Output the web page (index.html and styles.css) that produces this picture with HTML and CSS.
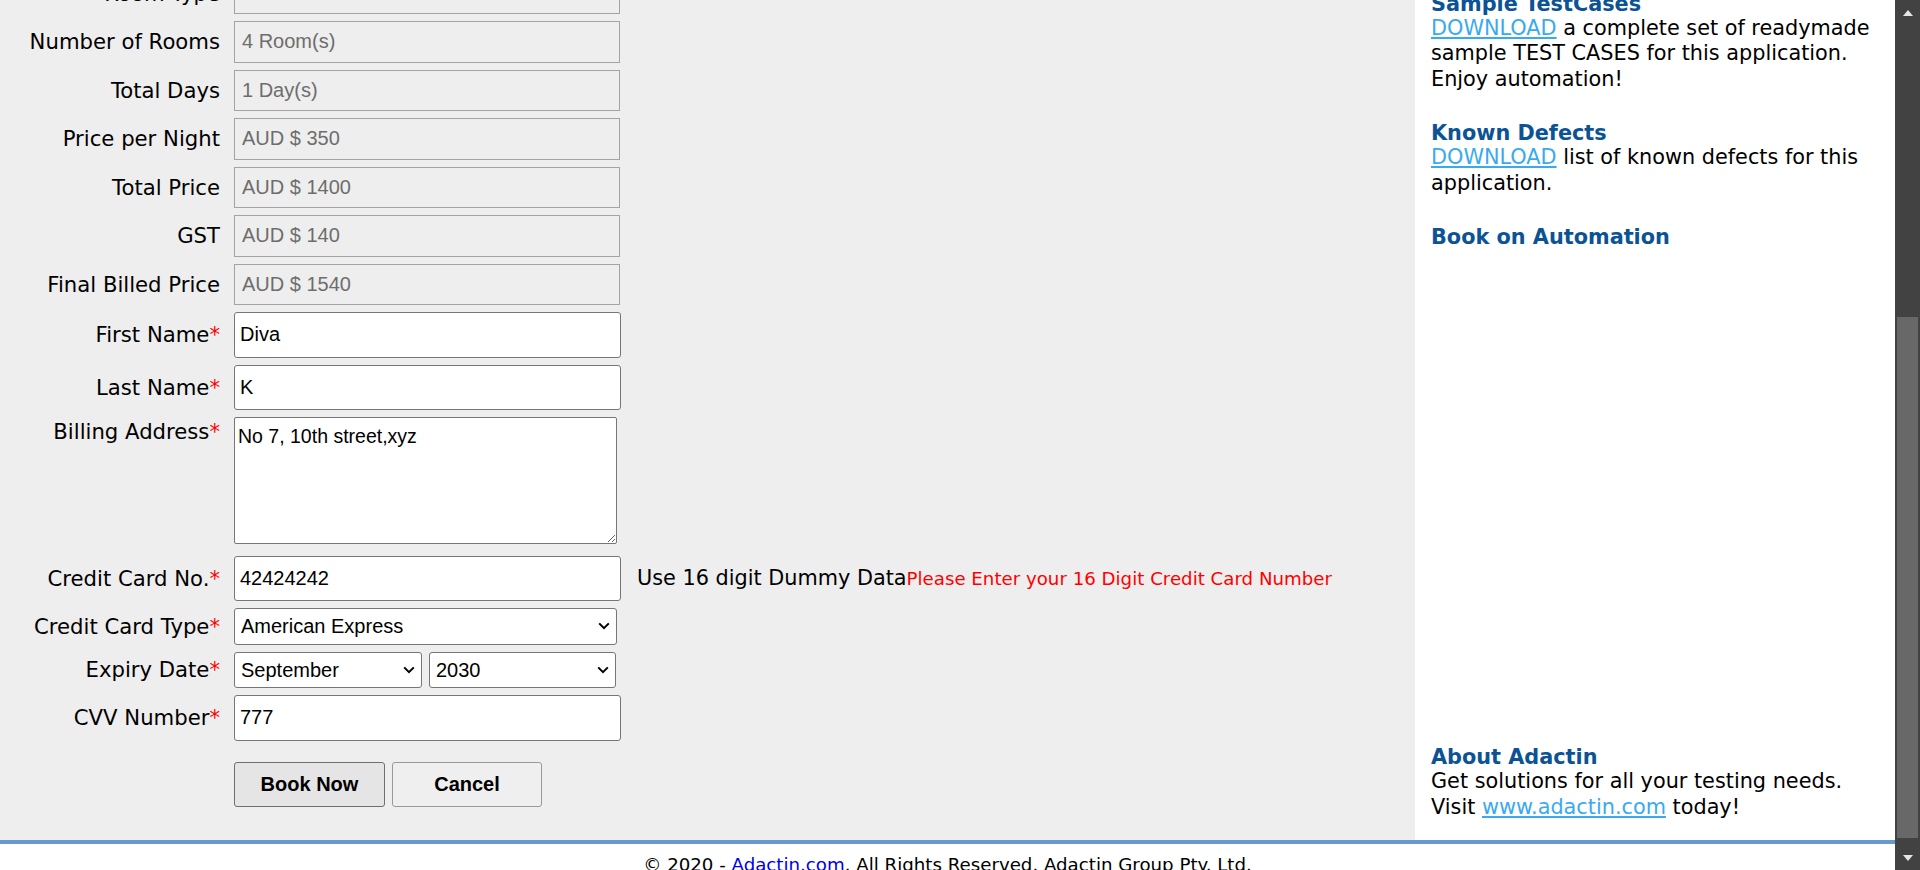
FILE: index.html
```html
<!DOCTYPE html>
<html lang="en">
<head>
<meta charset="utf-8">
<title>Adactin.com - Book A Hotel</title>
<link rel="stylesheet" href="styles.css">
</head>
<body>
<div class="window">
  <div class="page">
    <div class="main">
      <main class="left">
        <form class="form">
          <div class="row">
            <label class="lbl">Room Type</label>
            <input class="field ro" value="Standard" readonly>
          </div>
          <div class="row">
            <label class="lbl">Number of Rooms</label>
            <input class="field ro" value="4 Room(s)" readonly>
          </div>
          <div class="row">
            <label class="lbl">Total Days</label>
            <input class="field ro" value="1 Day(s)" readonly>
          </div>
          <div class="row">
            <label class="lbl">Price per Night</label>
            <input class="field ro" value="AUD $ 350" readonly>
          </div>
          <div class="row">
            <label class="lbl">Total Price</label>
            <input class="field ro" value="AUD $ 1400" readonly>
          </div>
          <div class="row">
            <label class="lbl">GST</label>
            <input class="field ro" value="AUD $ 140" readonly>
          </div>
          <div class="row">
            <label class="lbl">Final Billed Price</label>
            <input class="field ro" value="AUD $ 1540" readonly>
          </div>
          <div class="row">
            <label class="lbl">First Name<span class="req">*</span></label>
            <input class="field txt" value="Diva">
          </div>
          <div class="row">
            <label class="lbl">Last Name<span class="req">*</span></label>
            <input class="field txt" value="K">
          </div>
          <div class="row row-top">
            <label class="lbl lbl-top">Billing Address<span class="req">*</span></label>
            <textarea class="field area">No 7, 10th street,xyz</textarea>
          </div>
          <div class="row row-cc">
            <label class="lbl">Credit Card No.<span class="req">*</span></label>
            <input class="field txt cc" value="42424242">
            <span class="hint">Use 16 digit Dummy Data</span><span class="err">Please Enter your 16 Digit Credit Card Number</span>
          </div>
          <div class="row">
            <label class="lbl">Credit Card Type<span class="req">*</span></label>
            <span class="sel sel-type">
              <select class="field select">
                <option>American Express</option>
              </select>
              <svg class="chev" width="12" height="8" viewBox="0 0 12 8"><path d="M1.2 1.4 L6 6.2 L10.8 1.4" fill="none" stroke="#000" stroke-width="2"/></svg>
            </span>
          </div>
          <div class="row">
            <label class="lbl">Expiry Date<span class="req">*</span></label>
            <span class="sel sel-month">
              <select class="field select">
                <option>September</option>
              </select>
              <svg class="chev" width="12" height="8" viewBox="0 0 12 8"><path d="M1.2 1.4 L6 6.2 L10.8 1.4" fill="none" stroke="#000" stroke-width="2"/></svg>
            </span>
            <span class="sel sel-year">
              <select class="field select">
                <option>2030</option>
              </select>
              <svg class="chev" width="12" height="8" viewBox="0 0 12 8"><path d="M1.2 1.4 L6 6.2 L10.8 1.4" fill="none" stroke="#000" stroke-width="2"/></svg>
            </span>
          </div>
          <div class="row">
            <label class="lbl">CVV Number<span class="req">*</span></label>
            <input class="field txt cvv" value="777">
          </div>
          <div class="row row-btn">
            <span class="lbl"></span>
            <button type="button" class="btn btn-book">Book Now</button>
            <button type="button" class="btn btn-cancel">Cancel</button>
          </div>
        </form>
      </main>
      <aside class="side">
        <section class="sec sec-first">
          <div class="sec-h">Sample TestCases</div>
          <p class="sec-b"><a href="#">DOWNLOAD</a> a complete set of readymade sample TEST CASES for this application. Enjoy automation!</p>
        </section>
        <section class="sec">
          <div class="sec-h">Known Defects</div>
          <p class="sec-b"><a href="#">DOWNLOAD</a> list of known defects for this application.</p>
        </section>
        <section class="sec">
          <div class="sec-h">Book on Automation</div>
        </section>
        <section class="sec sec-about">
          <div class="sec-h">About Adactin</div>
          <p class="sec-b">Get solutions for all your testing needs. Visit <a href="#">www.adactin.com</a> today!</p>
        </section>
      </aside>
    </div>
    <footer class="foot">© 2020 - <a href="#">Adactin.com</a>. All Rights Reserved. Adactin Group Pty. Ltd.</footer>
  </div>
  <div class="scrollbar">
    <div class="sb-btn"><span class="tri-up"></span></div>
    <div class="sb-track"><span class="sb-thumb"></span></div>
    <div class="sb-btn"><span class="tri-down"></span></div>
  </div>
</div>
</body>
</html>
```

FILE: styles.css
```css
* { box-sizing: border-box; }

html, body {
  margin: 0;
  padding: 0;
  height: 100%;
  overflow: hidden;
}

body {
  font-family: "DejaVu Sans", Verdana, sans-serif;
  color: #000;
  background: #fff;
}

.window {
  display: flex;
  width: 1920px;
  height: 870px;
}

.page {
  flex: 1;
  min-width: 0;
  display: flex;
  flex-direction: column;
  overflow: hidden;
}

.main {
  display: flex;
  flex: none;
  height: 840px;
  overflow: hidden;
}

/* ---------- left form ---------- */
.left {
  flex: 1;
  background: #eeeeee;
  overflow: hidden;
}

.form {
  display: flex;
  flex-direction: column;
  gap: 7px;
  margin-top: -27.5px;
}

.row {
  display: flex;
  align-items: center;
}

.row-top { align-items: flex-start; }
.row-cc { margin-top: 5px; }
.row-btn { margin-top: 14.5px; }

.lbl {
  width: 220px;
  flex: none;
  margin-right: 14px;
  text-align: right;
  font-size: 21.2px;
  line-height: 24px;
  padding-top: 1px;
  white-space: nowrap;
}

.lbl-top { margin-top: 1.5px; }

.req { color: #ff0000; }

.field {
  font-family: "Liberation Sans", Arial, sans-serif;
  font-size: 20px;
  margin: 0;
  outline: none;
}

.ro {
  width: 386px;
  height: 41.5px;
  border: 1px solid #a3a3a3;
  border-radius: 0;
  background: #eeeeee;
  color: #6d6d6d;
  padding: 0 0 0 7px;
}

.txt {
  width: 387px;
  height: 45.5px;
  border: 1px solid #767676;
  border-radius: 3px;
  background: #fff;
  color: #000;
  padding: 0 0 0 5px;
}

.txt.cc { height: 44.5px; }

.area {
  width: 383px;
  height: 127px;
  border: 1px solid #767676;
  border-radius: 2px;
  background: #fff;
  color: #000;
  font-size: 19.5px;
  line-height: 22px;
  padding: 7px 3px;
}

.hint {
  margin-left: 16px;
  font-size: 20.8px;
  white-space: nowrap;
}

.err {
  color: #ff0000;
  font-size: 18.2px;
  white-space: nowrap;
}

.sel {
  position: relative;
  display: block;
  flex: none;
}

.sel-type { width: 383px; height: 37px; }
.sel-month { width: 188px; height: 36.5px; }
.sel-year { width: 187px; height: 36.5px; margin-left: 7px; }

.select {
  -webkit-appearance: none;
  appearance: none;
  display: block;
  width: 100%;
  height: 100%;
  border: 1px solid #767676;
  border-radius: 3px;
  background: #fff;
  color: #000;
  padding: 0 24px 0 6px;
}

.chev {
  position: absolute;
  right: 7px;
  top: 50%;
  margin-top: -4px;
  pointer-events: none;
}

.btn {
  height: 45px;
  margin: 0;
  font-family: "Liberation Sans", Arial, sans-serif;
  font-size: 20px;
  font-weight: bold;
  color: #000;
  border-radius: 3px;
  padding: 0;
}

.btn-book {
  width: 151px;
  background: #e5e5e5;
  border: 1px solid #6f6f6f;
}

.btn-cancel {
  width: 150px;
  margin-left: 7px;
  background: #efefef;
  border: 1px solid #9a9a9a;
}

/* ---------- right column ---------- */
.side {
  width: 480px;
  flex: none;
  display: flex;
  flex-direction: column;
  background: #fff;
  padding: 0 16px 20px;
  font-size: 20.8px;
  overflow: hidden;
}

.sec { margin-bottom: 29px; }
.sec-first { margin-top: -8.5px; }

.sec-about {
  margin-top: auto;
  margin-bottom: 0;
}

.sec-h {
  font-weight: bold;
  color: #0b5394;
  line-height: 24px;
  white-space: nowrap;
}

.sec-b {
  margin: 0;
  line-height: 25.5px;
}

.sec-b a {
  color: #3aaaf0;
  text-decoration: underline;
}

/* ---------- footer ---------- */
.foot {
  flex: none;
  height: 30px;
  border-top: 4px solid #6699cc;
  background: #fff;
  text-align: center;
  font-size: 18.2px;
  padding-top: 9.5px;
  white-space: nowrap;
  overflow: hidden;
}

.foot a {
  color: #0000ee;
  text-decoration: none;
}

/* ---------- scrollbar ---------- */
.scrollbar {
  width: 25px;
  flex: none;
  display: flex;
  flex-direction: column;
  background: #424242;
}

.sb-btn {
  height: 25px;
  flex: none;
  display: flex;
  align-items: center;
  justify-content: center;
}

.tri-up {
  width: 0;
  height: 0;
  border-left: 5.5px solid transparent;
  border-right: 5.5px solid transparent;
  border-bottom: 6px solid #e6e6e6;
}

.tri-down {
  width: 0;
  height: 0;
  border-left: 5.5px solid transparent;
  border-right: 5.5px solid transparent;
  border-top: 6px solid #e6e6e6;
}

.sb-track {
  flex: 1;
  display: flex;
  flex-direction: column;
  padding: 0 2px 7px;
}

.sb-thumb {
  display: block;
  margin-top: auto;
  height: 521px;
  background: #686868;
}
```
